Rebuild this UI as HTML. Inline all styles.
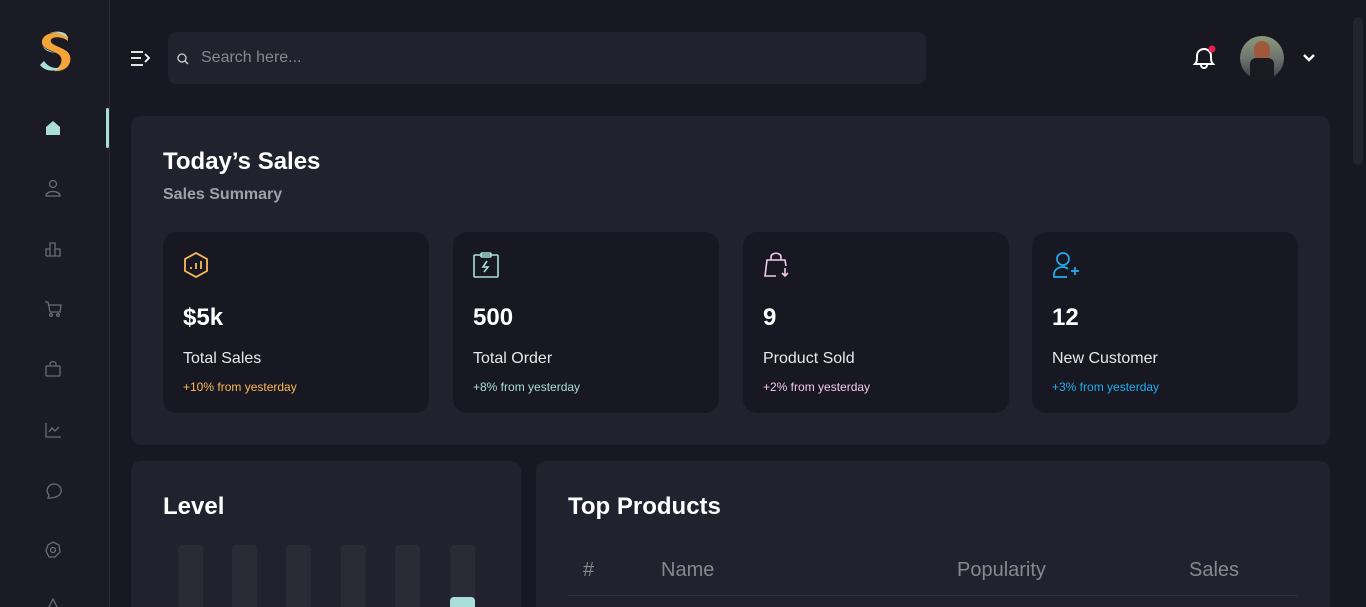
<!DOCTYPE html>
<html><head><meta charset="utf-8"><style>
*{box-sizing:border-box;margin:0;padding:0}
html,body{width:1366px;height:607px;overflow:hidden;background:#171821;font-family:"Liberation Sans",sans-serif;color:#fff}
body{position:relative}
.side{position:absolute;left:0;top:0;width:110px;height:607px;background:#1a1b25;border-right:1px solid #2a2b36}
.side svg{position:absolute;left:44px}
.act{position:absolute;left:106px;top:108px;width:3px;height:40px;background:#a9dfd8;border-radius:2px}
.search{position:absolute;left:168px;top:32px;width:758px;height:52px;background:#21222d;border-radius:8px}
.search span{position:absolute;left:33px;top:17px;font-size:16px;color:#87888c}
.panel{position:absolute;background:#21222d;border-radius:10px}
.card{position:absolute;top:232px;width:266px;height:181px;background:#171821;border-radius:14px}
.card .v{position:absolute;left:20px;top:72px;font-size:24px;font-weight:bold}
.card .l{position:absolute;left:20px;top:118px;font-size:16px;color:#e8e8ea}
.card .s{position:absolute;left:20px;top:148px;font-size:12px}
.card svg{position:absolute;left:20px;top:20px}
.bar{position:absolute;top:545px;width:25px;height:62px;background:#2b2b36;border-radius:4px 4px 0 0}
.th{position:absolute;top:559px;font-size:20px;color:#87888c}
</style></head><body>
<div class="side">
<svg style="left:36px;top:30px" width="38" height="44" viewBox="0 0 38 44"><path d="M32 7 C26 1 8 1 6 11 C5 19 16 20 22 24 C28 28 26 36 18 41 C30 42 36 34 34 26 C32 18 18 17 15 12 C13 7 24 5 32 11Z" fill="#f6a43a"/><path d="M4 35 C9 42 22 43 27 35 C25 39 14 40 8 31Z M6 11 C5 19 14 21 20 23 C12 22 6 20 6 11Z M30 4 C26 1 18 1 14 3 C20 2 26 3 32 8Z" fill="#a9dfd8"/></svg>
<div class="act"></div>
<svg style="top:119px" width="18" height="18" viewBox="0 0 18 18"><path d="M2 8 L9 2 L16 8 V16 H2Z" fill="#a9dfd8"/></svg>
<svg style="top:179px" width="18" height="18" viewBox="0 0 18 18" fill="none" stroke="#6b6c75" stroke-width="1.3"><circle cx="9" cy="5" r="3.5"/><path d="M2 17 C2 11 16 11 16 17Z"/></svg>
<svg style="top:240px" width="18" height="18" viewBox="0 0 18 18" fill="none" stroke="#6b6c75" stroke-width="1.3"><path d="M2 16 V9 H6 V16 M6 16 V3 H11 V16 M11 16 V9 H16 V16 H2"/></svg>
<svg style="top:300px" width="18" height="18" viewBox="0 0 18 18" fill="none" stroke="#6b6c75" stroke-width="1.3"><path d="M1 2 H4 L6 12 H16 L17 5 H5"/><circle cx="7" cy="15" r="1.3"/><circle cx="14" cy="15" r="1.3"/></svg>
<svg style="top:360px" width="18" height="18" viewBox="0 0 18 18" fill="none" stroke="#6b6c75" stroke-width="1.3"><rect x="2" y="6" width="14" height="10" rx="1"/><path d="M6 6 V4 C6 1 12 1 12 4 V6"/></svg>
<svg style="top:421px" width="18" height="18" viewBox="0 0 18 18" fill="none" stroke="#6b6c75" stroke-width="1.3"><path d="M2 2 V16 H17 M5 11 L8 7 L11 10 L15 6"/></svg>
<svg style="top:481px" width="20" height="20" viewBox="0 0 20 20" fill="none" stroke="#6b6c75" stroke-width="1.3"><path d="M4 17 L5 14 C1 10 4 3 10 3 C16 3 19 9 16 13 C14 16 9 17 4 17Z"/></svg>
<svg style="top:541px" width="18" height="18" viewBox="0 0 18 18" fill="none" stroke="#6b6c75" stroke-width="1.3"><path d="M9 1 L15 4 L16 11 L11 16 L5 16 L2 10 L4 4Z"/><circle cx="9" cy="9" r="2.5"/></svg>
<svg style="top:598px" width="18" height="9" viewBox="0 0 18 9" fill="none" stroke="#6b6c75" stroke-width="1.3"><path d="M5 9 L9 1 L13 9"/></svg>
</div>
<svg style="position:absolute;left:130px;top:50px" width="21" height="17" viewBox="0 0 21 17" fill="none" stroke="#fff" stroke-width="1.8"><path d="M1 2 H13 M1 8 H11 M1 15 H13 M15 4 L19 8 L15 12"/></svg>
<div class="search"><svg style="position:absolute;left:9px;top:21px" width="12" height="12" viewBox="0 0 12 12" fill="none" stroke="#cfd0d3" stroke-width="1.3"><circle cx="5" cy="5" r="4"/><path d="M8 8 L11 11"/></svg><span>Search here...</span></div>
<svg style="position:absolute;left:1192px;top:45px" width="26" height="26" viewBox="0 0 26 26" fill="none" stroke="#fff" stroke-width="2"><path d="M3 19 C5 17 5 15 5 11 C5 6 9 4 12 4 C16 4 19 7 19 11 C19 15 19 17 21 19Z M9 20 C9 24 15 24 15 20"/><circle cx="20" cy="4" r="3.5" fill="#ea1e4e" stroke="none"/></svg>
<div style="position:absolute;left:1240px;top:36px;width:44px;height:44px;border-radius:50%;background:linear-gradient(180deg,#8a9a7a,#6f7570 50%,#3a3c3f);overflow:hidden"><div style="position:absolute;left:14px;top:5px;width:16px;height:20px;border-radius:8px;background:#a0583c"></div><div style="position:absolute;left:10px;top:22px;width:24px;height:24px;border-radius:6px;background:#1a1b20"></div></div>
<svg style="position:absolute;left:1302px;top:53px" width="14" height="10" viewBox="0 0 14 10" fill="none" stroke="#fff" stroke-width="2.4"><path d="M2 2 L7 7 L12 2"/></svg>
<div style="position:absolute;left:1353px;top:17px;width:10px;height:148px;background:#23242e;border-radius:5px"></div>

<div class="panel" style="left:131px;top:116px;width:1199px;height:329px"></div>
<div style="position:absolute;left:163px;top:148px;font-size:24px;font-weight:bold">Today’s Sales</div>
<div style="position:absolute;left:163px;top:186px;font-size:16px;font-weight:bold;color:#a0a0a6">Sales Summary</div>

<div class="card" style="left:163px"><svg width="26" height="26" viewBox="0 0 26 26" fill="none" stroke="#feb95a" stroke-width="1.8"><path d="M13 1 L24 7 V19 L13 25 L2 19 V7Z"/><path d="M8 17 V15 M13 17 V11 M18 17 V9"/></svg><div class="v">$5k</div><div class="l">Total Sales</div><div class="s" style="color:#feb95a">+10% from yesterday</div></div>
<div class="card" style="left:453px"><svg width="26" height="26" viewBox="0 0 26 26" fill="none" stroke="#a9dfd8" stroke-width="1.6"><rect x="1" y="3" width="24" height="22" rx="1"/><rect x="8" y="1" width="10" height="4" rx="1"/><path d="M14 9 L10 15 H15 L11 20"/></svg><div class="v">500</div><div class="l">Total Order</div><div class="s" style="color:#a9dfd8">+8% from yesterday</div></div>
<div class="card" style="left:743px"><svg width="28" height="26" viewBox="0 0 28 26" fill="none" stroke="#f2c8ed" stroke-width="1.6"><path d="M13 24 H2 L4 8 H22 L23 14 M8 8 V5 C8 0 18 0 18 5 V8 M22 16 V24 M19 21 L22 24 L25 21"/></svg><div class="v">9</div><div class="l">Product Sold</div><div class="s" style="color:#f2c8ed">+2% from yesterday</div></div>
<div class="card" style="left:1032px"><svg width="28" height="28" viewBox="0 0 28 28" fill="none" stroke="#20aef3" stroke-width="1.7"><circle cx="11" cy="7" r="6"/><path d="M15 25 H2 C1 18 6 15 11 15 C13 15 15 16 16 17 M19 19 H27 M23 15 V23"/></svg><div class="v">12</div><div class="l">New Customer</div><div class="s" style="color:#20aef3">+3% from yesterday</div></div>

<div class="panel" style="left:131px;top:461px;width:390px;height:146px;border-radius:10px 10px 0 0"></div>
<div style="position:absolute;left:163px;top:493px;font-size:24px;font-weight:bold">Level</div>
<div class="bar" style="left:178px"></div><div class="bar" style="left:232px"></div><div class="bar" style="left:286px"></div><div class="bar" style="left:341px"></div><div class="bar" style="left:395px"></div><div class="bar" style="left:450px"></div>
<div style="position:absolute;left:450px;top:597px;width:25px;height:10px;background:#a9dfd8;border-radius:4px 4px 0 0"></div>

<div class="panel" style="left:536px;top:461px;width:794px;height:146px;border-radius:10px 10px 0 0"></div>
<div style="position:absolute;left:568px;top:493px;font-size:24px;font-weight:bold">Top Products</div>
<div class="th" style="left:583px">#</div><div class="th" style="left:661px">Name</div><div class="th" style="left:957px">Popularity</div><div class="th" style="left:1189px">Sales</div>
<div style="position:absolute;left:568px;top:595px;width:730px;height:1px;background:#2f303a"></div>
</body></html>
